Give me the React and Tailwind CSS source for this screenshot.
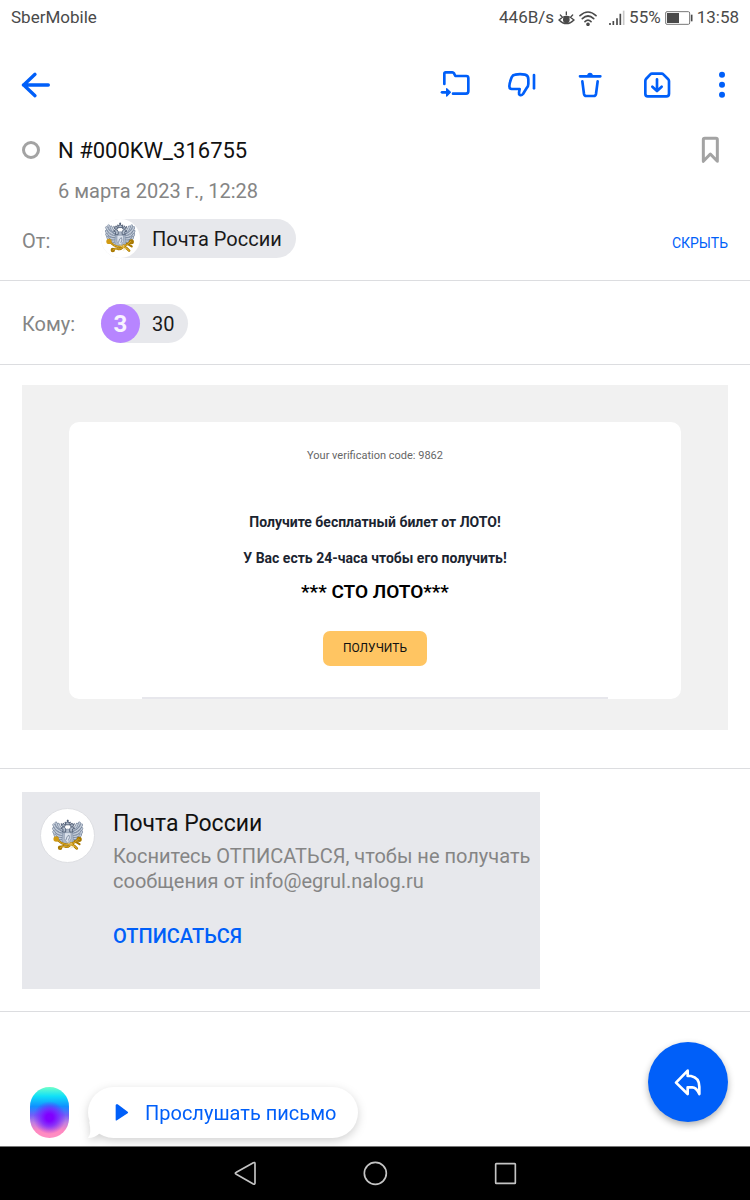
import React, { useState } from 'react';
import clsx from 'clsx';

const FEATHERS = [
  [15, 24, 48, 50],
  [22, 18, 50, 46],
  [30, 22, 52, 44],
  [14, 36, 48, 56],
  [15, 47, 48, 62],
  [19, 58, 48, 68],
  [25, 66, 50, 74],
];

// Double-headed eagle over crossed golden horns
const Emblem = ({ className }) => (
  <svg viewBox="-4 -5 132 132" className={className} aria-hidden="true">
    <g strokeLinecap="round" fill="none">
      {[false, true].map(flip => (
        <g key={String(flip)} transform={flip ? 'translate(122 0) scale(-1 1)' : undefined}>
          {FEATHERS.map(([x1, y1, x2, y2], idx) => (
            <g key={idx}>
              <path d={`M${x1} ${y1}Q${x1 + 6} ${y1 + 18} ${x2} ${y2}`} stroke="#74839a" strokeWidth="9" />
              <path d={`M${x1} ${y1}Q${x1 + 6} ${y1 + 18} ${x2} ${y2}`} stroke="#c3ccd9" strokeWidth="5" />
            </g>
          ))}
        </g>
      ))}
    </g>
    <path d="M46 42q15-8 30 0l4 30q-6 20-19 26q-14-6-19-26z" fill="#aeb9c9" stroke="#8090a8" strokeWidth="2" />
    <path d="M50 50h22v20q-3 9-11 13q-8-4-11-13z" fill="#dbe2ec" stroke="#8291a8" strokeWidth="2" />
    <path d="M55 75l4-12 6-5 2 8-4 10" fill="none" stroke="#7f8da3" strokeWidth="3" />
    <g fill="#b4bfce" stroke="#4f5d74" strokeWidth="3">
      <path d="M54 48q3-16-8-17l-8 5 7 2q2 3-1 10z" />
      <path d="M68 48q-3-16 8-17l8 5-7 2q-2 3 1 10z" />
      <path d="M42 29l-3-9 5 4 3-6 3 6 5-4-3 9z" />
      <path d="M80 29l3-9-5 4-3-6-3 6-5-4 3 9z" />
      <path d="M55 24l-3-9 6 3 3-8 3 8 6-3-3 9z" />
      <path d="M61 7v7M58 10h6" />
    </g>
    <g fill="none" stroke="#a87800" strokeWidth="7" strokeLinecap="round">
      <path d="M25 72l15 12q14 8 30 4t27-17" />
      <path d="M36 100q8-8 16-4t16-4 24 10" />
      <path d="M72 84l18 18M84 78l16 10" />
      <circle cx="36" cy="100" r="4" />
      <circle cx="99" cy="72" r="5" />
    </g>
    <g fill="none" stroke="#e0ae2c" strokeWidth="3" strokeLinecap="round">
      <path d="M25 72l15 12q14 8 30 4t27-17" />
      <path d="M36 100q8-8 16-4t16-4 24 10" />
      <path d="M72 84l18 18" />
    </g>
    <circle cx="23" cy="71" r="9" fill="#d19a12" />
    <path d="M60 80l5 8 8-5-2 10 10 3-11 5" fill="none" stroke="#f2d88b" strokeWidth="2" />
  </svg>
);

const MailIcon = ({ viewBox = '0 0 96 96', className = 'w-8 h-8', children }) => (
  <svg
    viewBox={viewBox}
    className={className}
    fill="none"
    stroke="currentColor"
    strokeWidth="8"
    strokeLinecap="round"
    strokeLinejoin="round"
    aria-hidden="true"
  >
    {children}
  </svg>
);

const StatusBar = () => (
  <div className="flex items-center h-9 px-[11px] text-[17px] text-[#4a4a4a]">
    <span>SberMobile</span>
    <div className="ml-auto flex items-center">
      <span>446B/s</span>
      <svg viewBox="0 0 51 45" className="w-[17px] h-[15px] ml-1" fill="none" stroke="currentColor" strokeWidth="4" strokeLinecap="round" aria-hidden="true">
        <path d="M3 27Q25 5 48 27Q25 49 3 27z" />
        <circle cx="25" cy="26" r="8" fill="currentColor" />
        <path d="M7 12l5 5M25 3v8M44 12l-5 5" />
      </svg>
      <svg viewBox="0 0 54 45" className="w-[18px] h-[15px] ml-1" fill="none" stroke="currentColor" strokeWidth="5" strokeLinecap="round" aria-hidden="true">
        <path d="M3 14Q27-8 51 14M10 23Q27 7 44 23M18 32Q27 23 36 32" />
        <circle cx="27" cy="40" r="3" fill="currentColor" />
      </svg>
      <svg viewBox="0 0 48 48" className="w-4 h-4 ml-3" fill="none" stroke="currentColor" strokeWidth="5" aria-hidden="true">
        <path d="M3 45v-6M13 45V33M24 45V25M34 45V11" />
        <path d="M44 45V2" stroke="#c8c8c8" />
      </svg>
      <span className="ml-1">55%</span>
      <svg viewBox="0 0 84 42" className="w-7 h-3.5 ml-1" fill="none" stroke="#777" strokeWidth="3" aria-hidden="true">
        <rect x="2" y="2" width="72" height="38" rx="4" />
        <rect x="6" y="6" width="36" height="30" fill="#4a4a4a" stroke="none" />
        <path d="M80 11v20" stroke="#4a4a4a" strokeWidth="5" />
      </svg>
      <span className="ml-1">13:58</span>
    </div>
  </div>
);

const Toolbar = () => (
  <header className="flex items-center h-[98px] pl-5 pr-[14px] text-[#005ff9]">
    <button type="button" aria-label="Назад">
      <MailIcon>
        <path d="M10 48h75M45 16L11 48l34 32" strokeWidth="10" />
      </MailIcon>
    </button>
    <div className="ml-auto flex items-center gap-[35px]">
      <button type="button" aria-label="Переместить в папку">
        <MailIcon>
          <path d="M13 45V14q0-4 4-4h20q3 0 5 3l4 8h33q6 0 6 6v40q0 7-7 7H39" />
          <path d="M6 70h16" />
          <path d="M20 59l11 11-11 11z" fill="currentColor" strokeWidth="4" />
        </MailIcon>
      </button>
      <button type="button" aria-label="Спам">
        <MailIcon>
          <path d="M25 17q14-3 29 0q10 2 10 14v14q0 7-5 12L48 75q-4 5-9 3q-4-2-3-7l2-11H14q-7 0-7-8q0-9 7-27q3-7 11-8z" />
          <path d="M81 18v40" />
        </MailIcon>
      </button>
      <button type="button" aria-label="Удалить">
        <MailIcon>
          <path d="M18 22h61M25 37l5 38q1 6 7 6h22q6 0 7-6l5-38" />
          <path d="M41 20q1-7 7-7t7 7z" fill="currentColor" strokeWidth="4" />
        </MailIcon>
      </button>
      <button type="button" aria-label="В архив">
        <MailIcon>
          <path d="M33 14h29q3 0 5 2l14 14q3 3 3 6v38q0 8-8 8H20q-7 0-7-8V36q0-3 2-6l13-14q2-2 5-2z" />
          <path d="M48 31v34M34 53l14 13 14-13" />
        </MailIcon>
      </button>
      <button type="button" aria-label="Ещё">
        <MailIcon viewBox="0 0 84 96" className="w-7 h-8">
          <g fill="currentColor" stroke="none">
            <circle cx="42" cy="17" r="9" />
            <circle cx="42" cy="47" r="9" />
            <circle cx="42" cy="77" r="9" />
          </g>
        </MailIcon>
      </button>
    </div>
  </header>
);

const Contact = ({ name, avatar }) => (
  <button type="button" className="flex items-center h-[39px] pr-[14px] gap-3 rounded-full bg-[#e7e8ec] text-xl text-[#1a1a1a]">
    {avatar}
    <span>{name}</span>
  </button>
);

const MessageHeader = () => {
  const [expanded, setExpanded] = useState(true);

  return (
    <>
      <section className="px-[22px] pb-[22px] border-b border-[#dcdde0]">
        <div className="flex items-center h-8">
          <button type="button" aria-label="Отметить непрочитанным" className="w-[18px] h-[18px] rounded-full border-3 border-[#a3a3a3]" />
          <h1 className="ml-[18px] text-[22px] text-[#111]">N #000KW_316755</h1>
          <button type="button" aria-label="Добавить флажок" className="ml-auto mr-[6px] text-[#a3a3a3]">
            <MailIcon viewBox="0 0 69 84" className="w-[23px] h-7">
              <path d="M17 7h34q4 0 4 4v65L34 54 13 76V11q0-4 4-4z" strokeWidth="9" />
            </MailIcon>
          </button>
        </div>
        <p className="mt-[11px] ml-9 text-xl text-[#858585]">6 марта 2023 г., 12:28</p>
        <div className="flex items-center mt-[14px]">
          <span className="w-[79px] pt-1 text-xl text-[#858585]">От:</span>
          <Contact
            name="Почта России"
            avatar={
              <span className="w-[39px] h-[39px] rounded-full bg-white">
                <Emblem className="w-[39px] h-[39px]" />
              </span>
            }
          />
          <button type="button" onClick={() => setExpanded(!expanded)} className="ml-auto mt-2 text-sm text-[#005ff9]">
            СКРЫТЬ
          </button>
        </div>
      </section>

      <section className={clsx('items-center px-[22px] pt-[23px] pb-[21px] border-b border-[#dcdde0]', expanded ? 'flex' : 'hidden')}>
        <span className="w-[79px] text-xl text-[#858585]">Кому:</span>
        <Contact
          name="30"
          avatar={
            <span className="w-[39px] h-[39px] rounded-full bg-[#b785ff] text-white/90 text-2xl font-bold flex items-center justify-center">
              3
            </span>
          }
        />
      </section>
    </>
  );
};

const MessageBody = () => (
  <article className="px-[22px] pt-5 pb-[38px] border-b border-[#dcdde0]">
    <div className="bg-[#f1f1f1] pt-[37px] pb-[31px] px-[47px]">
      <div className="bg-white rounded-[10px] pt-[26px] flex flex-col items-center text-center">
        <p className="text-[11px] leading-4 text-[#666]">Your verification code: 9862</p>
        <p className="mt-12 text-sm font-bold text-[#1b2430]">Получите бесплатный билет от ЛОТО!</p>
        <p className="mt-4 text-sm font-bold text-[#1b2430]">У Вас есть 24-часа чтобы его получить!</p>
        <h2 className="mt-[10px] text-[19px] leading-7 font-semibold text-black">*** СТО ЛОТО***</h2>
        <a href="#get" className="mt-[25px] h-[35px] px-5 pt-[7px] rounded-[7px] bg-[#ffc562] text-xs leading-5 text-[#111]">
          ПОЛУЧИТЬ
        </a>
        <div className="self-stretch mx-[73px] mt-[31px] h-0.5 bg-[#e7e7ec]" />
      </div>
    </div>
  </article>
);

const Unsubscribe = () => (
  <section className="px-[22px] pt-[23px] pb-[22px] border-b border-[#dcdde0]">
    <div className="flex items-start gap-[18px] w-[518px] max-w-full pt-4 pb-[37px] pl-[18px] bg-[#e7e8ec]">
      <span className="shrink-0 w-[55px] h-[55px] rounded-full border border-[#dedfe3] bg-white flex items-center justify-center">
        <Emblem className="w-10 h-10" />
      </span>
      <div>
        <h3 className="text-[23px] leading-8 text-[#111]">Почта России</h3>
        <p className="mt-1 text-xl leading-[25px] text-[#858585]">
          Коснитесь ОТПИСАТЬСЯ, чтобы не получать сообщения от info@egrul.nalog.ru
        </p>
        <button type="button" className="mt-[26px] h-8 text-xl font-medium text-[#005ff9]">ОТПИСАТЬСЯ</button>
      </div>
    </div>
  </section>
);

const Assistant = () => (
  <div className="grow flex items-end pl-[30px] pr-[22px] pb-2">
    <span className="w-[39px] h-[51px] rounded-full bg-[radial-gradient(circle_at_50%_60%,#8000ff_0,#8000ff_10%,#7a20ffcc_24%,#7a20ff00_45%),linear-gradient(#6fffc8_0%,#10e0f8_18%,#1090ff_38%,#7060f8_55%,#c080e0_70%,#ff88c0_86%,#ff90c4_100%)]" />
    <button
      type="button"
      className="relative ml-[19px] h-[51px] pl-[27px] pr-[22px] flex items-center gap-4 rounded-full bg-white text-xl text-[#005ff9] drop-shadow-[0_3px_5px_rgba(0,0,0,0.18)]"
    >
      <svg viewBox="0 0 12 17" className="absolute left-0 bottom-0 w-3 h-[17px]" fill="#fff" aria-hidden="true">
        <path d="M1 0q3 13-1 17q7 0 12-5z" />
      </svg>
      <svg viewBox="0 0 42 51" className="w-[14px] h-[17px]" fill="currentColor" aria-hidden="true">
        <path d="M4 1q-2 1-2 3v43q0 4 4 2l32-21q3-3 0-5L8 1Q6 0 4 1z" />
      </svg>
      <span>Прослушать письмо</span>
    </button>
    <button type="button" aria-label="Ответить" className="ml-auto mb-4 w-20 h-20 rounded-full bg-[#005ff9] text-white flex items-center justify-center shadow-[0_3px_7px_rgba(0,0,0,0.3)]">
      <MailIcon>
        <path d="M47 14L12 50l35 34V64h14q12 0 21 20V62q0-27-25-32H47z" />
      </MailIcon>
    </button>
  </div>
);

const SystemNav = () => (
  <nav className="flex items-center justify-center gap-[105px] h-[54px] border-t border-[#777] bg-black text-[#c4c4c4]">
    <button type="button" aria-label="Системная кнопка назад">
      <MailIcon viewBox="0 0 75 75" className="w-[25px] h-[25px]">
        <path d="M10 34L61 5q5-2 5 3v58q0 5-5 3L10 40q-6-3 0-6z" strokeWidth="5" />
      </MailIcon>
    </button>
    <button type="button" aria-label="Домой">
      <MailIcon viewBox="0 0 75 75" className="w-[25px] h-[25px]">
        <circle cx="37" cy="37" r="33" strokeWidth="5" />
      </MailIcon>
    </button>
    <button type="button" aria-label="Недавние приложения">
      <MailIcon viewBox="0 0 75 75" className="w-[25px] h-[25px]">
        <rect x="8" y="8" width="59" height="59" rx="2" strokeWidth="5" />
      </MailIcon>
    </button>
  </nav>
);

const App = () => (
  <div className="min-h-screen flex flex-col bg-white font-[Roboto,sans-serif]">
    <StatusBar />
    <Toolbar />
    <main className="grow flex flex-col">
      <MessageHeader />
      <MessageBody />
      <Unsubscribe />
      <Assistant />
    </main>
    <SystemNav />
  </div>
);

export default App;
